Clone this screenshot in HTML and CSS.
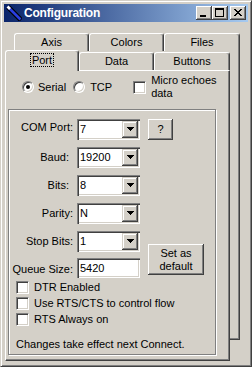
FILE: index.html
```html
<!DOCTYPE html>
<html>
<head>
<meta charset="utf-8">
<link rel="stylesheet" href="styles.css">
</head>
<body>
<div class="window">
  <div class="titlebar">
    <svg class="appicon" width="16" height="16" viewBox="0 0 16 16">
      <line x1="2" y1="2" x2="15" y2="15" stroke="#000" stroke-width="5"/>
      <line x1="2.5" y1="2.5" x2="14.5" y2="14.5" stroke="#2a3ee0" stroke-width="2.6"/>
      <line x1="1.5" y1="1.5" x2="4" y2="4" stroke="#fff" stroke-width="2.6"/>
    </svg>
    <span class="title">Configuration</span>
    <div class="capbtns">
      <div class="capbtn"><svg width="16" height="14" viewBox="0 0 16 14" shape-rendering="crispEdges"><rect x="4" y="9" width="6" height="2" fill="#000"/></svg></div>
      <div class="capbtn"><svg width="16" height="14" viewBox="0 0 16 14" shape-rendering="crispEdges"><path d="M3 2h9v9h-9z M4 4v6h7v-6z" fill="#000" fill-rule="evenodd"/></svg></div>
      <div class="capbtn close"><svg width="16" height="14" viewBox="0 0 16 14" shape-rendering="crispEdges"><path d="M4 3h2v1h1v1h2v-1h1v-1h2v1h-1v1h-1v1h-1v1h1v1h1v1h1v1h-2v-1h-1v-1h-2v1h-1v1h-2v-1h1v-1h1v-1h1v-1h-1v-1h-1v-1h-1z" fill="#000"/></svg></div>
    </div>
  </div>
  <div class="client">
    <div class="tabctl">
      <div class="layer back">
        <div class="tabrow">
          <div class="tab w75">Axis</div>
          <div class="tab w75">Colors</div>
          <div class="tab w76">Files</div>
        </div>
        <div class="backbody"></div>
      </div>
      <div class="layer front">
        <div class="tabrow">
          <div class="tab sel w74"><span class="focus">Port</span></div>
          <div class="tab w75">Data</div>
          <div class="tab w76">Buttons</div>
        </div>
        <div class="page">
          <div class="toprow">
            <span class="radio on r-serial"></span><span class="lbl-serial">Serial</span>
            <span class="radio r-tcp"></span><span class="lbl-tcp">TCP</span>
            <span class="check c-micro"></span><span class="lbl-micro">Micro echoes<br>data</span>
          </div>
          <div class="group">
            <div class="form">
              <span class="flabel up">COM Port:</span>
              <div class="combo"><span class="val">7</span><span class="dd"><svg width="7" height="4" viewBox="0 0 7 4" shape-rendering="crispEdges"><path d="M0 0h7v1h-1v1h-1v1h-1v1h-1v-1h-1v-1h-1v-1h-1z" fill="#000"/></svg></span></div>
              <div class="btn qbtn">?</div>

              <span class="flabel r4">Baud:</span>
              <div class="combo"><span class="val">19200</span><span class="dd"><svg width="7" height="4" viewBox="0 0 7 4" shape-rendering="crispEdges"><path d="M0 0h7v1h-1v1h-1v1h-1v1h-1v-1h-1v-1h-1v-1h-1z" fill="#000"/></svg></span></div>
              <span class="empty"></span>

              <span class="flabel r4">Bits:</span>
              <div class="combo"><span class="val">8</span><span class="dd"><svg width="7" height="4" viewBox="0 0 7 4" shape-rendering="crispEdges"><path d="M0 0h7v1h-1v1h-1v1h-1v1h-1v-1h-1v-1h-1v-1h-1z" fill="#000"/></svg></span></div>
              <span class="empty"></span>

              <span class="flabel">Parity:</span>
              <div class="combo"><span class="val">N</span><span class="dd"><svg width="7" height="4" viewBox="0 0 7 4" shape-rendering="crispEdges"><path d="M0 0h7v1h-1v1h-1v1h-1v1h-1v-1h-1v-1h-1v-1h-1z" fill="#000"/></svg></span></div>
              <span class="empty"></span>

              <span class="flabel">Stop Bits:</span>
              <div class="combo"><span class="val">1</span><span class="dd"><svg width="7" height="4" viewBox="0 0 7 4" shape-rendering="crispEdges"><path d="M0 0h7v1h-1v1h-1v1h-1v1h-1v-1h-1v-1h-1v-1h-1z" fill="#000"/></svg></span></div>
              <div class="btn defbtn">Set as<br>default</div>

              <span class="flabel">Queue Size:</span>
              <div class="edit"><span class="val">5420</span></div>
            </div>
            <div class="checks">
              <div class="crow"><span class="check"></span><span class="ctext">DTR Enabled</span></div>
              <div class="crow"><span class="check"></span><span class="ctext">Use RTS/CTS to control flow</span></div>
              <div class="crow"><span class="check"></span><span class="ctext">RTS Always on</span></div>
            </div>
            <div class="note">Changes take effect next Connect.</div>
          </div>
        </div>
      </div>
    </div>
  </div>
</div>
</body>
</html>
```

FILE: styles.css
```css
* { box-sizing: border-box; }
html, body { margin: 0; padding: 0; }
body {
  width: 252px; height: 367px; overflow: hidden;
  font-family: "Liberation Sans", Arial, sans-serif;
  font-size: 11px; color: #000; background: #d4d0c8;
}
.window {
  width: 252px; height: 367px;
  background: #d4d0c8;
  border: 1px solid; border-color: #d4d0c8 #404040 #404040 #d4d0c8;
  box-shadow: inset 1px 1px #fff, inset -1px -1px #808080;
  padding: 3px;
  display: flex; flex-direction: column;
}
.titlebar {
  height: 18px; flex: none;
  background: linear-gradient(to right, #0a246a, #a6caf0);
  display: flex; align-items: center;
  padding-left: 2px; padding-right: 2px;
}
.appicon { display: block; flex: none; }
.title {
  color: #fff; font-weight: bold; font-size: 12px; letter-spacing: -0.2px;
  margin-left: 2px; line-height: 18px;
}
.capbtns { margin-left: auto; display: flex; }
.capbtn {
  width: 16px; height: 14px; background: #d4d0c8;
  box-shadow: inset -1px -1px #404040, inset 1px 1px #fff, inset -2px -2px #808080;
}
.capbtn svg { display: block; }
.capbtn.close { margin-left: 2px; }

.client { flex: 1; }
.tabctl {
  display: grid;
  margin: 11px 0 0 1px;
  width: 235px; height: 328px;
}
.layer { grid-area: 1 / 1; display: flex; flex-direction: column; }
.back { margin-left: 9px; height: 307px; }
.front { margin-top: 17px; margin-right: 10px; }
.tabrow { display: flex; align-items: flex-end; flex: none; }
.back .tabrow { height: 18px; }
.front .tabrow { height: 20px; position: relative; z-index: 1; }
.tab {
  height: 18px;
  border-top: 1px solid #fff; border-left: 1px solid #fff;
  border-right: 1px solid #404040;
  border-radius: 3px 3px 0 0;
  box-shadow: inset -1px 0 #808080;
  background: #d4d0c8;
  display: flex; justify-content: center; align-items: center;
  padding-bottom: 1px;
}
.w74 { width: 74px; }
.w75 { width: 75px; }
.w76 { width: 76px; }
.tab.sel { height: 21px; margin-bottom: -1px; padding-bottom: 3px; }
.focus { outline: 1px dotted #000; outline-offset: 0; padding: 0 1px; line-height: 12px; }
.backbody {
  flex: 1;
  border-right: 1px solid #404040; border-bottom: 1px solid #404040;
  box-shadow: inset -1px -1px #808080;
}
.page {
  flex: 1;
  border: 1px solid; border-color: #fff #404040 #404040 #fff;
  box-shadow: inset -1px -1px #808080;
  background: #d4d0c8;
  padding-top: 3px;
}
.toprow { height: 26px; display: flex; align-items: center; }
.radio {
  width: 12px; height: 12px; border-radius: 50%; flex: none;
  background: #fff;
  border: 1px solid; border-color: #808080 #fff #fff #808080;
  box-shadow: inset 1px 1px #404040, inset -1px -1px #d4d0c8;
  position: relative;
}
.radio.on::after {
  content: ""; position: absolute; left: 3px; top: 3px;
  width: 4px; height: 4px; border-radius: 50%; background: #000;
}
.check {
  width: 13px; height: 13px; flex: none; display: block;
  background: #fff;
  border: 1px solid; border-color: #808080 #fff #fff #808080;
  box-shadow: inset 1px 1px #404040, inset -1px -1px #d4d0c8;
}
.r-serial { margin-left: 16px; }
.lbl-serial { margin-left: 4px; }
.r-tcp { margin-left: 7px; }
.lbl-tcp { margin-left: 5px; }
.c-micro { margin-left: 21px; }
.lbl-micro { margin-left: 5px; line-height: 13px; }

.group {
  margin: 9px 0 0 2px;
  width: 208px; height: 246px;
  border: 1px solid #808080;
  box-shadow: inset 1px 1px #fff, 1px 1px 0 #fff;
  padding-top: 9px;
}
.form {
  display: grid;
  grid-template-columns: 64px 63px 60px;
  grid-auto-rows: 21px;
  column-gap: 4px; row-gap: 7px;
}
.flabel { justify-self: end; align-self: center; line-height: 13px; }
.flabel.r4 { margin-right: 4px; }
.flabel.up { margin-top: -4px; }
.combo, .edit {
  width: 63px; height: 21px; display: flex;
  background: #fff;
  box-shadow: inset 1px 1px #808080, inset 2px 2px #404040, inset -1px -1px #fff, inset -2px -2px #d4d0c8;
  padding: 2px;
}
.edit { height: 20px; margin-top: -1px; }
.val { flex: 1; padding-left: 1px; line-height: 17px; }
.edit .val { line-height: 16px; }
.dd {
  width: 16px; height: 17px; flex: none; background: #d4d0c8;
  box-shadow: inset -1px -1px #404040, inset 1px 1px #d4d0c8, inset -2px -2px #808080, inset 2px 2px #fff;
  display: flex; align-items: center; justify-content: center;
  padding-bottom: 1px;
}
.dd svg { display: block; }
.btn {
  background: #d4d0c8;
  box-shadow: inset -1px -1px #404040, inset 1px 1px #fff, inset -2px -2px #808080;
  display: flex; align-items: center; justify-content: center;
  text-align: center; line-height: 13px;
}
.qbtn { width: 25px; margin-left: 4px; }
.defbtn {
  grid-row: 5 / span 2; grid-column: 3;
  width: 56px; height: 31px; margin-left: 4px;
  align-self: end; margin-bottom: 5px;
}
.checks { margin-top: 0; padding-left: 7px; }
.crow { height: 16px; display: flex; align-items: flex-start; padding-top: 1px; }
.ctext { margin-left: 5px; line-height: 13px; }
.note { margin-top: 9px; padding-left: 7px; line-height: 14px; }
```
